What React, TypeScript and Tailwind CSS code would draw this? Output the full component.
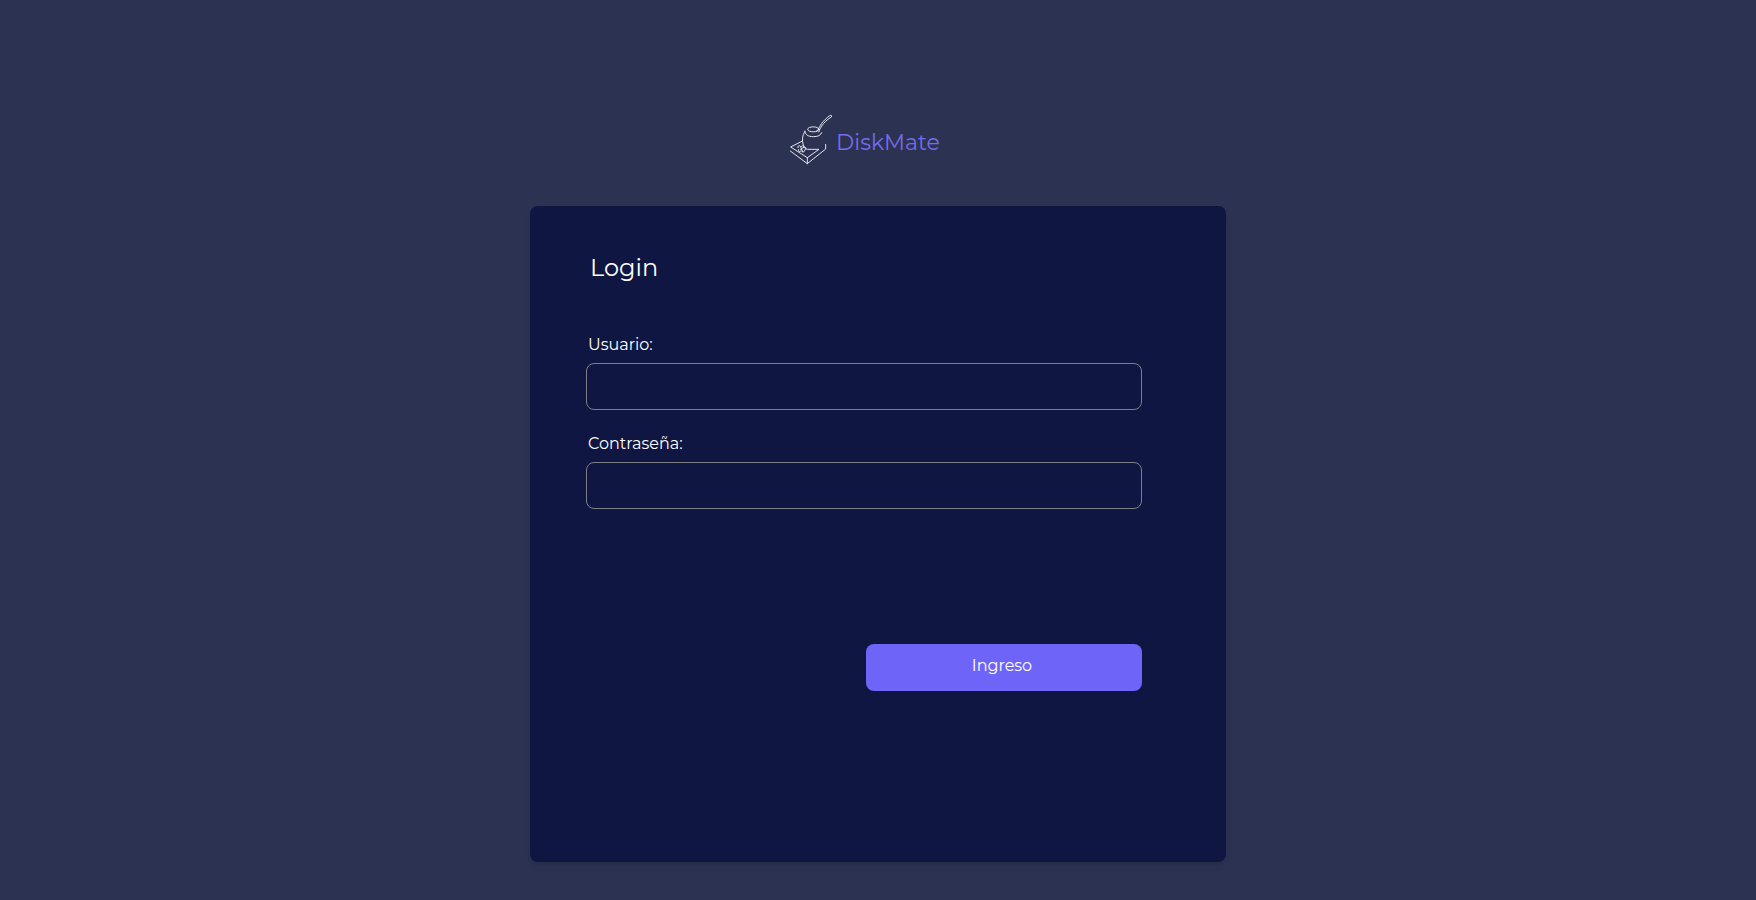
import React from "react";

function MateLogo() {
  return (
    <svg
      viewBox="27 27 132 153"
      className="h-[51px] w-[44px] shrink-0"
      fill="none"
      stroke="#e8ebef"
      strokeWidth="2.9"
      strokeLinecap="round"
      strokeLinejoin="round"
      aria-hidden="true"
    >
      <ellipse cx="100" cy="73" rx="17" ry="7.5" />
      <path d="M110 79C117 71 119 63 125 55C132 46 141 38 149 32C153 29 157 32 154 36C142 43 132 53 125 63C121 69 118 76 116 81" />
      <path d="M75 78C74 89 85 95 100 95C113 95 122 92 125 83" />
      <path d="M74 80C67 91 66 106 69 117C71 125 75 130 82 133H117L82 158L32 126L67 108" />
      <path d="M31 138L82 176L137 132V118" />
      <path d="M82 158V176" />
      <path d="M54 128C52 120 59 121 63 126C66 120 73 121 71 128C79 126 81 133 74 134C75 142 67 143 64 137C58 143 53 138 56 133" />
      <path d="M62 126L68 140M72 126L62 133" />
    </svg>
  );
}

type FieldProps = { id: string; label: string; type: string };

function Field({ id, label, type }: FieldProps) {
  return (
    <div className="flex flex-col gap-1">
      <label htmlFor={id} className="pl-0.5 text-base leading-7">
        {label}
      </label>
      <input
        id={id}
        name={id}
        type={type}
        className="h-[47px] w-full rounded-lg border border-[#7d7f86] bg-transparent px-3 text-base outline-none focus:border-[#6f64f8]"
      />
    </div>
  );
}

export default function App() {
  return (
    <main className="flex min-h-screen flex-col items-center bg-[#2c3252] px-4 pt-[114px] pb-[38px] font-['Montserrat','Inter',sans-serif] text-white">
      <header className="mb-[41px] flex w-full max-w-[696px] items-center justify-center gap-[3px] pr-[27px]">
        <MateLogo />
        <span className="pt-1.5 text-[22px] leading-8 text-[#756ceb]">DiskMate</span>
      </header>
      <form
        onSubmit={(event) => event.preventDefault()}
        className="flex w-full max-w-[696px] grow flex-col rounded-lg bg-[#0f1641] pt-[46px] pr-[84px] pb-16 pl-14 shadow-md"
      >
        <h1 className="mb-[47px] pl-1 text-2xl leading-8 font-normal">Login</h1>
        <div className="flex flex-col gap-5">
          <Field id="usuario" label="Usuario:" type="text" />
          <Field id="clave" label="Contraseña:" type="password" />
        </div>
        <button
          type="submit"
          className="mt-[135px] h-[47px] w-[276px] self-end rounded-lg bg-[#6f64f8] pr-1 pb-1 text-base"
        >
          Ingreso
        </button>
      </form>
    </main>
  );
}
